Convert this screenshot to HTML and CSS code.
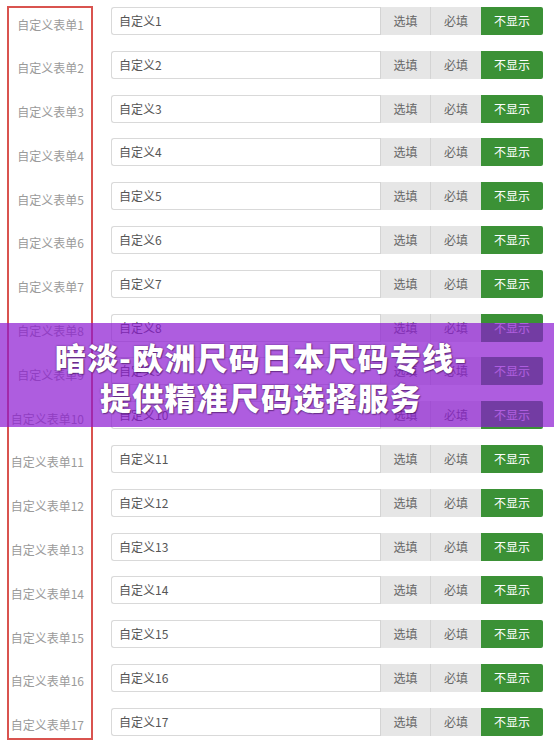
FILE: index.html
```html
<!DOCTYPE html>
<html lang="zh-CN">
<head>
<meta charset="utf-8">
<title>自定义表单</title>
<link rel="stylesheet" href="styles.css">
</head>
<body>
<div class="page">
  <div class="labels">
    <div class="label">自定义表单1</div>
    <div class="label">自定义表单2</div>
    <div class="label">自定义表单3</div>
    <div class="label">自定义表单4</div>
    <div class="label">自定义表单5</div>
    <div class="label">自定义表单6</div>
    <div class="label">自定义表单7</div>
    <div class="label">自定义表单8</div>
    <div class="label">自定义表单9</div>
    <div class="label">自定义表单10</div>
    <div class="label">自定义表单11</div>
    <div class="label">自定义表单12</div>
    <div class="label">自定义表单13</div>
    <div class="label">自定义表单14</div>
    <div class="label">自定义表单15</div>
    <div class="label">自定义表单16</div>
    <div class="label">自定义表单17</div>
  </div>
  <div class="rows">
    <div class="row"><div class="field">自定义1</div><div class="btn">选填</div><div class="btn">必填</div><div class="btn on">不显示</div></div>
    <div class="row"><div class="field">自定义2</div><div class="btn">选填</div><div class="btn">必填</div><div class="btn on">不显示</div></div>
    <div class="row"><div class="field">自定义3</div><div class="btn">选填</div><div class="btn">必填</div><div class="btn on">不显示</div></div>
    <div class="row"><div class="field">自定义4</div><div class="btn">选填</div><div class="btn">必填</div><div class="btn on">不显示</div></div>
    <div class="row"><div class="field">自定义5</div><div class="btn">选填</div><div class="btn">必填</div><div class="btn on">不显示</div></div>
    <div class="row"><div class="field">自定义6</div><div class="btn">选填</div><div class="btn">必填</div><div class="btn on">不显示</div></div>
    <div class="row"><div class="field">自定义7</div><div class="btn">选填</div><div class="btn">必填</div><div class="btn on">不显示</div></div>
    <div class="row"><div class="field">自定义8</div><div class="btn">选填</div><div class="btn">必填</div><div class="btn on">不显示</div></div>
    <div class="row"><div class="field">自定义9</div><div class="btn">选填</div><div class="btn">必填</div><div class="btn on">不显示</div></div>
    <div class="row"><div class="field">自定义10</div><div class="btn">选填</div><div class="btn">必填</div><div class="btn on">不显示</div></div>
    <div class="row"><div class="field">自定义11</div><div class="btn">选填</div><div class="btn">必填</div><div class="btn on">不显示</div></div>
    <div class="row"><div class="field">自定义12</div><div class="btn">选填</div><div class="btn">必填</div><div class="btn on">不显示</div></div>
    <div class="row"><div class="field">自定义13</div><div class="btn">选填</div><div class="btn">必填</div><div class="btn on">不显示</div></div>
    <div class="row"><div class="field">自定义14</div><div class="btn">选填</div><div class="btn">必填</div><div class="btn on">不显示</div></div>
    <div class="row"><div class="field">自定义15</div><div class="btn">选填</div><div class="btn">必填</div><div class="btn on">不显示</div></div>
    <div class="row"><div class="field">自定义16</div><div class="btn">选填</div><div class="btn">必填</div><div class="btn on">不显示</div></div>
    <div class="row"><div class="field">自定义17</div><div class="btn">选填</div><div class="btn">必填</div><div class="btn on">不显示</div></div>
  </div>
  <div class="banner">
    <div class="banner-title">暗淡-欧洲尺码日本尺码专线-<br>提供精准尺码选择服务</div>
  </div>
</div>
</body>
</html>
```

FILE: styles.css
```css
html, body {
  margin: 0;
  padding: 0;
  background: #ffffff;
}

body {
  font-family: "Noto Sans CJK SC", "Noto Sans", sans-serif;
  width: 554px;
  height: 750px;
  overflow: hidden;
}

.page {
  position: relative;
  display: flex;
  align-items: flex-start;
  width: 554px;
  height: 750px;
}

.labels {
  box-sizing: border-box;
  margin: 6px 0 0 7px;
  width: 86px;
  height: 734px;
  border: 2px solid #d9534f;
  padding: 2.5px 7px 0 0;
  display: flex;
  flex-direction: column;
  gap: 15.8px;
}

.label {
  height: 28px;
  line-height: 28px;
  font-size: 12px;
  color: #9a9a9a;
  text-align: right;
  white-space: nowrap;
}

.rows {
  margin: 7px 0 0 18px;
  width: 432px;
  display: flex;
  flex-direction: column;
  gap: 15.8px;
}

.row {
  display: flex;
  height: 28px;
}

.field {
  box-sizing: border-box;
  flex: 1;
  border: 1px solid #d9d9d9;
  border-right: none;
  border-radius: 3px 0 0 3px;
  padding-left: 7px;
  font-size: 12px;
  line-height: 26px;
  color: #555555;
  background: #ffffff;
}

.btn {
  box-sizing: border-box;
  width: 50px;
  height: 28px;
  line-height: 28px;
  text-align: center;
  font-size: 12px;
  color: #666666;
  background: #e6e6e6;
  border-left: 1px solid #d4d4d4;
}

.btn + .btn {
  width: 51px;
}

.btn.on {
  width: 62px;
  background: #3b9136;
  color: #ffffff;
  border-left: none;
  border-radius: 0 2px 2px 0;
}

.banner {
  box-sizing: border-box;
  position: absolute;
  left: 0;
  top: 323px;
  width: 554px;
  height: 104px;
  padding: 4px 32px 0 0;
  background: rgba(140, 24, 210, 0.7);
  display: flex;
  align-items: center;
  justify-content: center;
}

.banner-title {
  text-align: center;
  color: #ffffff;
  font-size: 31px;
  font-weight: 900;
  line-height: 40px;
  letter-spacing: 1.2px;
  text-shadow: 0 0 2px rgba(40, 0, 60, 0.6), 1px 1px 1px rgba(40, 0, 60, 0.4);
}
```
